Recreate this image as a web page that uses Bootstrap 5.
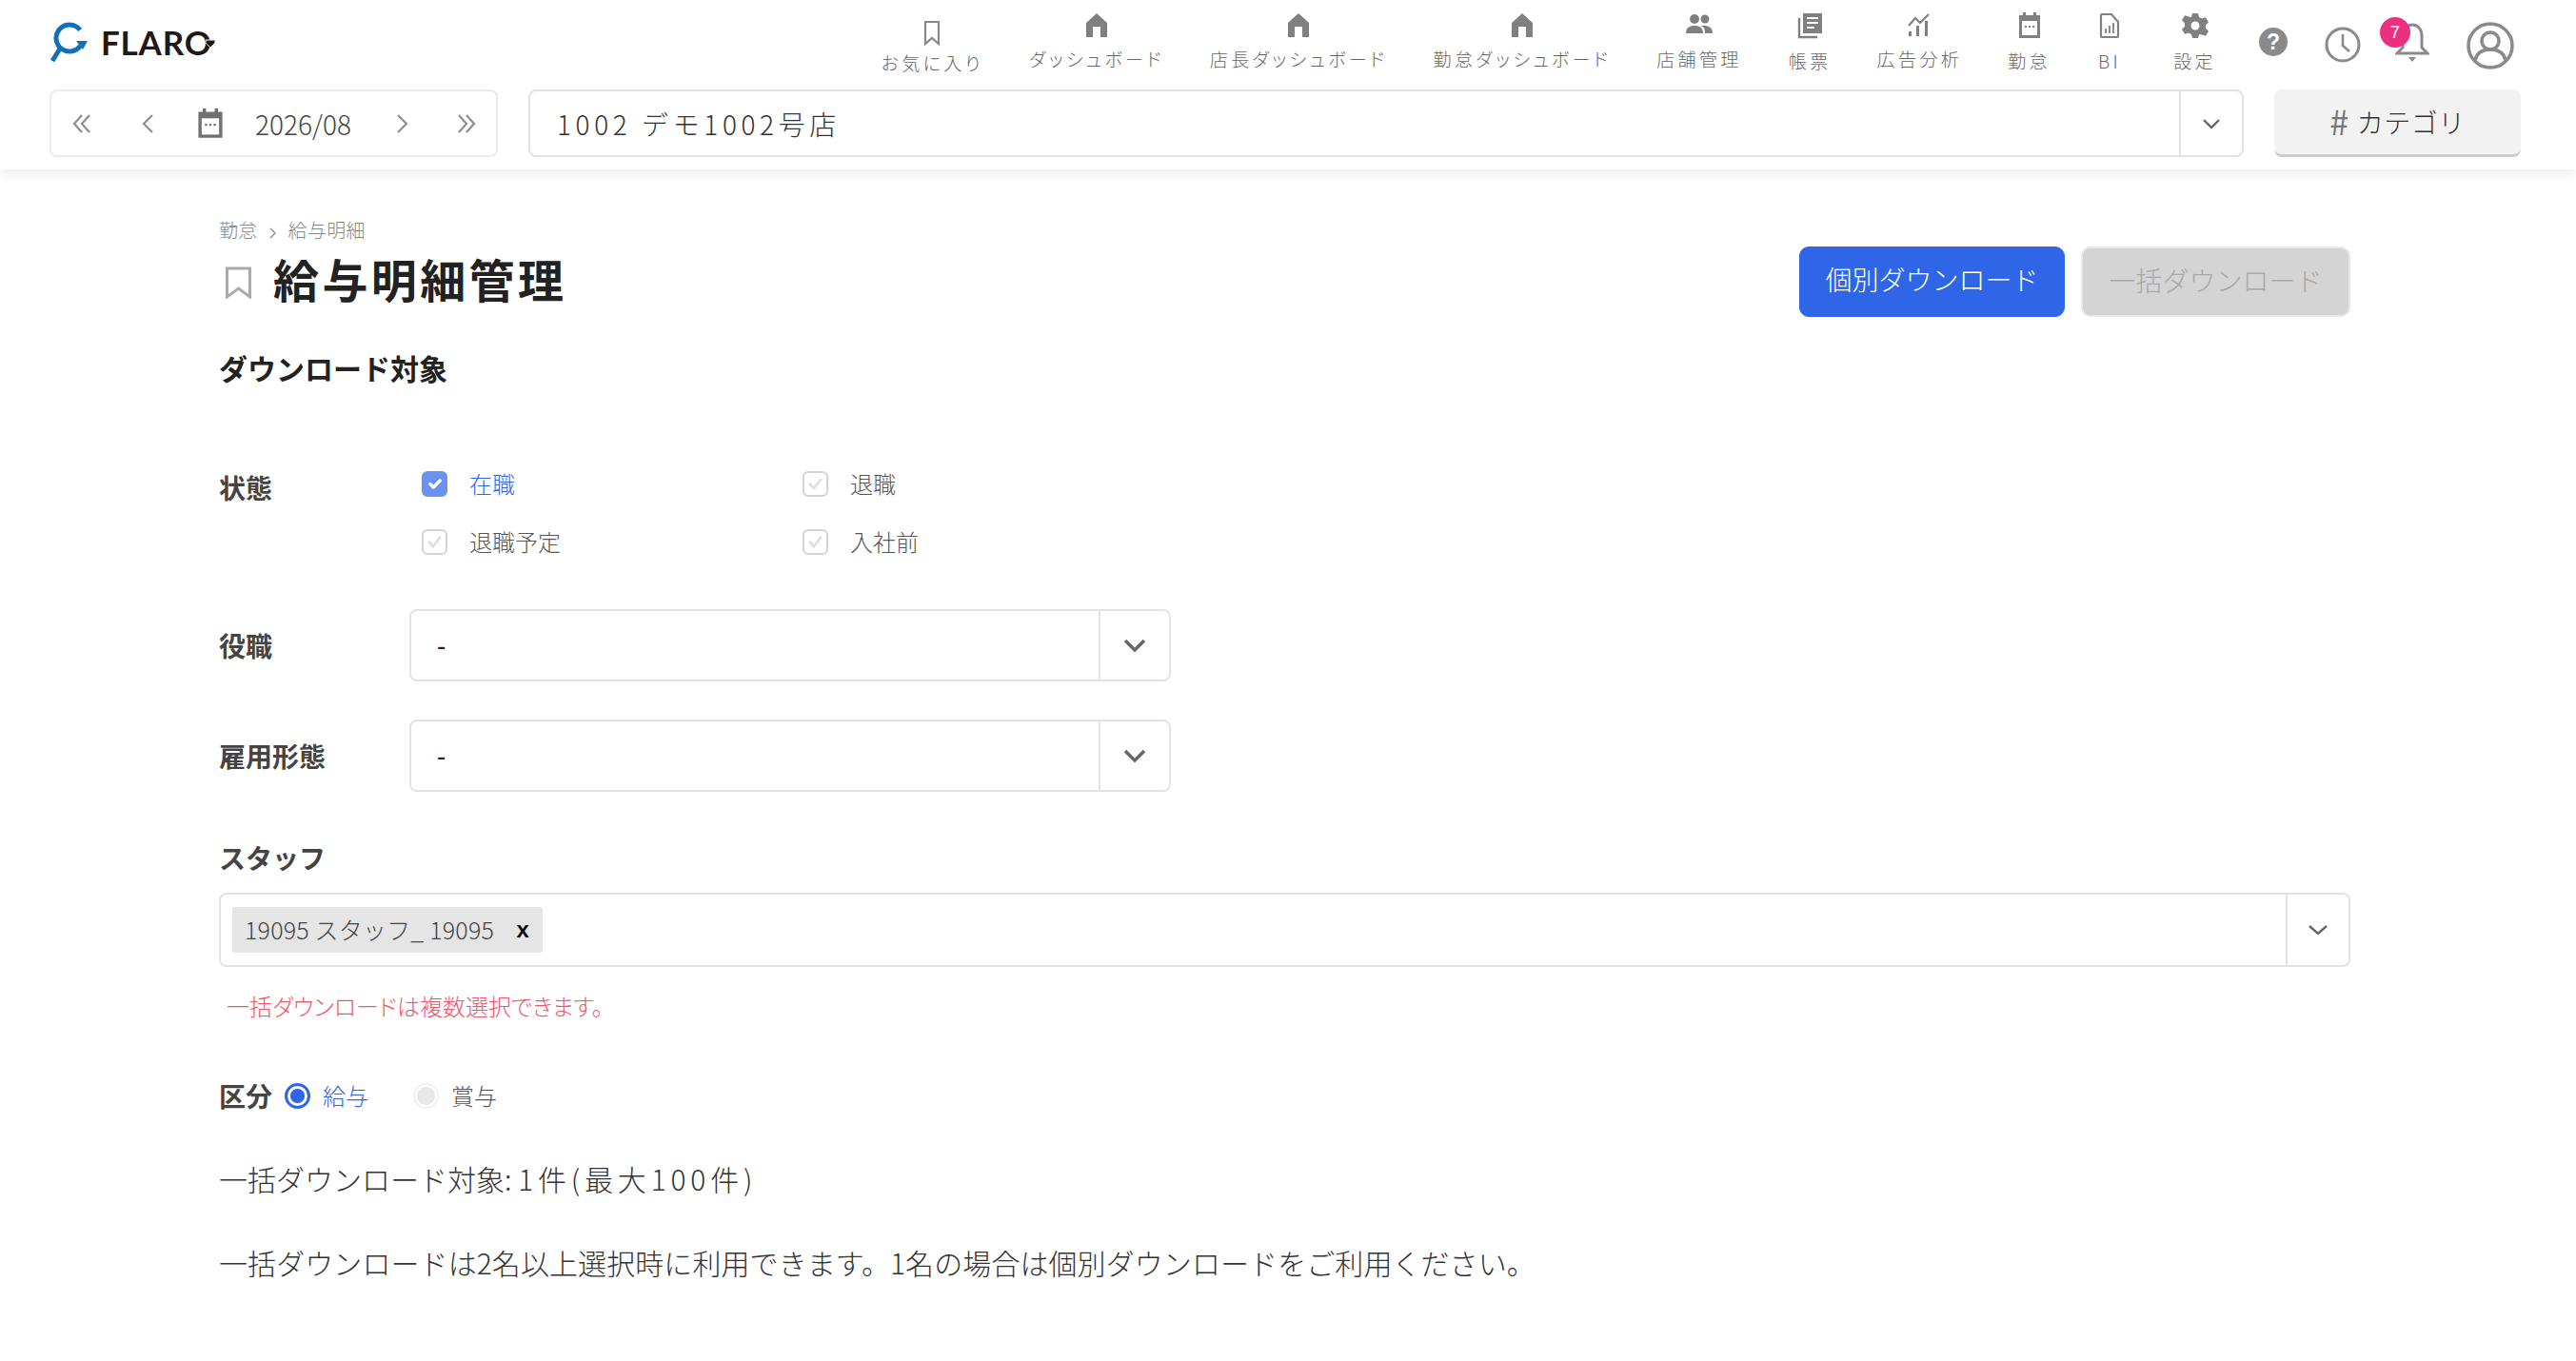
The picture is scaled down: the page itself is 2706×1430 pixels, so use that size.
<!DOCTYPE html>
<html lang="ja">
<head>
<meta charset="UTF-8">
<title>給与明細管理</title>
<link href="https://cdn.jsdelivr.net/npm/bootstrap@5.3.0/dist/css/bootstrap.min.css" rel="stylesheet">
<style>
body { font-family: "Noto Sans CJK JP", "Liberation Sans", sans-serif; color: #333; background: #fff; font-weight: 300; }
.top-head { height: 178px; box-shadow: 0 5px 12px rgba(0,0,0,.07); padding: 0 58px 0 52px; }
.head-row1 { height: 94px; }
.logo-text { font-family: Lato, sans-serif; font-weight: 700; font-size: 35px; color: #231815; line-height: 1; margin-left: 8px; letter-spacing: .8px; }
.logo-arrow { position: absolute; right: -3px; top: 13px; }
.nav-cell { color: #666; font-size: 19px; letter-spacing: 3.4px; line-height: 26px; font-feature-settings: "palt"; text-align: center; white-space: nowrap; margin-left: 48px; padding-top: 13px; }
.nav-cell svg { display: block; margin: 0 auto 10px; }
.nav-fav { padding-top: 21px; }
.nav-fav svg { margin-bottom: 4px; }
.nav-report { margin-left: 49px; }
.nav-bi { margin-left: 50px; }
.nav-set { margin-left: 55px; }
.tool-icons { margin-left: 44px; gap: 36px; padding-top: 20px; margin-right: 7px; }
.help-icon { margin-right: 2px; }
.bell-wrap { width: 36px; height: 50px; margin-right: 3px; }
.bell-badge { position: absolute; left: -16px; top: -2px; width: 32px; height: 32px; border-radius: 50%; background: #ec2f7f; color: #fff; font-size: 18px; line-height: 32px; text-align: center; font-family: "Liberation Sans", sans-serif; }
.head-row2 { gap: 32px; }
.date-box { width: 471px; height: 71px; border: 2px solid #ebebeb; border-radius: 8px; padding-left: 21px; font-size: 28px; color: #444; }
.date-prev { margin-left: 51px; }
.date-cal { margin-left: 45px; }
.date-txt { margin-left: 33px; width: 100px; white-space: nowrap; }
.date-next { margin-left: 48px; }
.date-last { margin-left: 49px; }
.shop-box { width: 1802px; height: 71px; border: 2px solid #e2e2e2; border-radius: 8px; }
.shop-name { font-size: 28px; letter-spacing: 4.6px; padding-left: 28px; color: #333; }
.arrow-cell { width: 66px; border-left: 2px solid #e2e2e2; }
.cat-btn { width: 259px; height: 71px; background: #f2f2f2; border: 0; border-bottom: 3px solid #ccc; border-radius: 8px; font-size: 28px; letter-spacing: .5px; color: #333; font-weight: 300; padding: 0 0 1px; }
.cat-hash { color: #777; font-size: 36px; line-height: 1; font-weight: 400; margin-right: 8px; vertical-align: -2px; }
.page-body { padding: 52px 237px 0 230px; }
.crumb-line { font-size: 20px; color: #888; line-height: 24px; letter-spacing: .3px; }
.crumb-line svg { margin: 0 12px; }
.title-row { height: 74px; margin-top: 5px; }
.title-mark { margin-left: 6px; margin-top: 2px; }
.page-title { font-size: 48px; font-weight: 700; letter-spacing: 3.4px; color: #222; margin: 0 0 0 22px; line-height: 1; padding-bottom: 8px; }
.btn-one { width: 279px; height: 74px; background: #2f66e8; border-color: #2f66e8; color: #fff; font-size: 28px; border-radius: 10px; font-weight: 300; padding: 0 0 6px; }
.btn-all, .btn-all:disabled { width: 283px; height: 74px; background: #d4d4d4; border: 2px solid #e8e8e8; color: #a8a8a8; font-size: 28px; border-radius: 10px; font-weight: 300; padding: 0 0 4px; opacity: 1; margin-left: 17px; }
.sect-title { font-size: 30px; font-weight: 700; color: #222; line-height: 40px; margin: 33px 0 0; }
.lbl-strong { font-size: 28px; font-weight: 700; color: #444; line-height: 36px; }
.state-row { margin-top: 88px; }
.state-lbl { width: 213px; }
.state-grid { display: grid; grid-template-columns: 400px 300px; row-gap: 33px; }
.chk-item { margin: 0; padding: 0; min-height: 26px; display: flex; align-items: center; gap: 23px; font-size: 24px; line-height: 26px; color: #555; }
.chk-item .form-check-input { float: none; margin: 1px 0 0; width: 27px; height: 27px; border-radius: 6px; border: 2px solid #d4d4d4; opacity: 1; }
.chk-item .chk-on:checked { background-color: #6a92f5; border-color: #6a92f5; }
.chk-item .chk-off:checked { background-color: #fff; background-image: url("data:image/svg+xml,%3csvg xmlns='http://www.w3.org/2000/svg' viewBox='0 0 20 20'%3e%3cpath fill='none' stroke='%23e0e0e0' stroke-linecap='round' stroke-linejoin='round' stroke-width='2.4' d='m5 10 3.5 4L15 6'/%3e%3c/svg%3e"); }
.txt-blue { color: #2f66e8; }
.sel-row { margin-top: 40px; }
.sel-row-first { margin-top: 57px; }
.sel-lbl { width: 200px; }
.sel-box { width: 800px; height: 76px; border: 2px solid #e2e2e2; border-radius: 8px; font-size: 26px; color: #222; }
.sel-val { padding-left: 27px; font-weight: 500; padding-bottom: 3px; }
.arrow-wide { width: 74px; border-left: 2px solid #e2e2e2; }
.arrow-staff { width: 66px; border-left: 2px solid #e2e2e2; }
.staff-lbl { margin-top: 51px; }
.staff-box { height: 78px; border: 2px solid #e2e2e2; border-radius: 8px; margin-top: 19px; padding-left: 12px; }
.staff-chip { height: 48px; width: 326px; background: #e5e5e5; border-radius: 3px; padding: 0 14px 0 13px; font-size: 25px; letter-spacing: .2px; color: #444; white-space: nowrap; }
.chip-x { font-size: 24px; font-weight: 700; color: #111; font-family: "Liberation Sans", sans-serif; line-height: 1; }
.note-red { color: #ef5468; font-size: 24px; margin: 25px 0 0 8px; line-height: 32px; font-feature-settings: "palt"; letter-spacing: 0; }
.kubun-row { margin-top: 60px; height: 36px; }
.kubun-row .lbl-strong { margin-right: 13px; }
.rad-item { display: flex; align-items: center; gap: 13px; font-size: 24px; margin: 0; padding: 0; min-height: 0; color: #555; }
.rad-item .form-check-input { float: none; margin: 0; width: 27px; height: 27px; opacity: 1; }
.rad-item .rad-on:checked[type=radio] { background-color: #fff; border: 3px solid #2f66e8; background-image: radial-gradient(circle, #2f66e8 0 7px, #fff 8px); }
.rad-item .rad-off:checked[type=radio] { background-color: #fff; border: 2px solid #f0f0f0; background-image: radial-gradient(circle, #e8e8e8 0 9px, #fff 10px); }
.rad-second { margin-left: 47px; }
.info-line { font-size: 30px; line-height: 44px; color: #333; margin: 0; }
.info-first { margin-top: 47px; }
.info-second { margin-top: 44px; letter-spacing: .08px; }
.info-wide { letter-spacing: 4.8px; }
</style>
</head>
<body>
<header class="top-head">
  <div class="head-row1 d-flex justify-content-between">
    <div class="d-flex align-items-center" style="padding-bottom:6px">
      <svg width="46" height="42" viewBox="0 0 46 42"><circle cx="21" cy="17" r="14" fill="none" stroke="#1270b8" stroke-width="5" stroke-dasharray="70 18" transform="rotate(35 21 17)"/><path d="M28 20h12l-5 9z" fill="#1270b8"/><path d="M11 28 3 41" stroke="#1270b8" stroke-width="5" fill="none"/></svg>
      <span class="logo-text position-relative">FLARO<svg class="logo-arrow" width="10" height="10" viewBox="0 0 10 10"><path d="M0 2h10v3l-5 5-5-5z" fill="#231815" stroke="#fff"/></svg></span>
    </div>
    <nav class="d-flex">
      <div class="nav-cell nav-fav"><svg width="20" height="28" viewBox="0 0 20 28"><path d="M3 2h14v23l-7-6-7 6z" fill="none" stroke="#888" stroke-width="2.2"/></svg>お気に入り</div>
      <div class="nav-cell"><svg width="24" height="26" viewBox="0 0 24 26"><path d="M12 1 23 11v15h-7V15H8v11H1V11z" fill="#808080"/></svg>ダッシュボード</div>
      <div class="nav-cell"><svg width="24" height="26" viewBox="0 0 24 26"><path d="M12 1 23 11v15h-7V15H8v11H1V11z" fill="#808080"/></svg>店長ダッシュボード</div>
      <div class="nav-cell"><svg width="24" height="26" viewBox="0 0 24 26"><path d="M12 1 23 11v15h-7V15H8v11H1V11z" fill="#808080"/></svg>勤怠ダッシュボード</div>
      <div class="nav-cell"><svg width="30" height="26" viewBox="0 0 30 26"><circle cx="10" cy="7" r="5" fill="#808080"/><circle cx="21" cy="7" r="4.5" fill="#808080"/><path d="M1 22c0-6 4-8 9-8s9 2 9 8zM20 14c5 0 9 2 9 8h-8c0-3-0-6-4-8z" fill="#808080"/></svg>店舗管理</div>
      <div class="nav-cell nav-report"><svg width="28" height="28" viewBox="0 0 28 28"><path d="M3 6v20h19" fill="none" stroke="#808080" stroke-width="2.4"/><path d="M7 1h20v21H7z" fill="#808080"/><path d="M11 6h12M11 11h12M11 16h8" stroke="#fff" stroke-width="2.2"/></svg>帳票</div>
      <div class="nav-cell"><svg width="26" height="26" viewBox="0 0 26 26"><path d="M2 14 9 6l5 5 9-9" fill="none" stroke="#808080" stroke-width="2.2"/><path d="M2 20h3v5H2zM10 14h3v11h-3zM19 9h3v16h-3z" fill="#808080"/></svg>広告分析</div>
      <div class="nav-cell"><svg width="24" height="28" viewBox="0 0 24 28"><path d="M5 0h3v3h8V0h3v3h4v24H1V3h4z" fill="#808080"/><path d="M4 9h16v15H4z" fill="#fff"/><path d="M7 14h2v2H7zM11 14h2v2h-2zM15 14h2v2h-2z" fill="#808080"/></svg>勤怠</div>
      <div class="nav-cell nav-bi"><svg width="22" height="28" viewBox="0 0 22 28"><path d="M3 2h10l7 8v15a1 1 0 0 1-1 1H3a1 1 0 0 1-1-1V3a1 1 0 0 1 1-1z" fill="none" stroke="#808080" stroke-width="2.2"/><path d="M7 17v5M11 14v8M15 11v11" stroke="#808080" stroke-width="1.8"/></svg>BI</div>
      <div class="nav-cell nav-set"><svg width="28" height="28" viewBox="0 0 28 28"><path d="M11 1h6l1 4 3 1.6 4-1.4 3 5-3 3v3.600l3 3-3 5-4-1.400L18 23l-1 4h-6l-1-4-3-1.600-4 1.400-3-5 3-3v-3.600l-3-3 3-5 4 1.400L10 5z" fill="#808080"/><circle cx="14" cy="14" r="4.500" fill="#fff"/></svg>設定</div>
      <div class="d-flex tool-icons align-items-start">
        <svg class="mt-2 help-icon" width="32" height="32" viewBox="0 0 32 32"><circle cx="16" cy="16" r="15" fill="#8a8a8a"/><text x="16" y="24" font-size="23" font-weight="700" fill="#fff" text-anchor="middle" font-family="Liberation Sans">?</text></svg>
        <svg class="mt-2" width="38" height="38" viewBox="0 0 38 38"><circle cx="19" cy="19" r="17" fill="none" stroke="#8a8a8a" stroke-width="3"/><path d="M19 8v12l7 6" fill="none" stroke="#8a8a8a" stroke-width="2.600"/></svg>
        <div class="bell-wrap position-relative">
          <svg width="36" height="48" viewBox="0 0 36 48"><path d="M18 6c-6 0-10 5-10 12v12l-6 6h32l-6-6V18c0-7-4-12-10-12z" fill="none" stroke="#8a8a8a" stroke-width="3"/><path d="M14 40h8l-4 5z" fill="#8a8a8a"/></svg>
          <span class="bell-badge">7</span>
        </div>
        <svg style="margin-top:3px" width="50" height="50" viewBox="0 0 50 50"><circle cx="25" cy="25" r="23" fill="none" stroke="#8a8a8a" stroke-width="3.500"/><circle cx="25" cy="20" r="9" fill="none" stroke="#8a8a8a" stroke-width="3.500"/><path d="M9 40c2-8 8-11 16-11s14 3 16 11" fill="none" stroke="#8a8a8a" stroke-width="3.500"/></svg>
      </div>
    </nav>
  </div>
  <div class="head-row2 d-flex">
    <div class="date-box d-flex align-items-center">
      <svg width="22" height="24" viewBox="0 0 22 24"><path d="M11 3 3 12l8 9M19 3l-8 9 8 9" fill="none" stroke="#8f8f8f" stroke-width="2.200"/></svg>
      <svg class="date-prev" width="14" height="24" viewBox="0 0 14 24"><path d="M12 3 3 12l9 9" fill="none" stroke="#8f8f8f" stroke-width="2.200"/></svg>
      <svg class="date-cal" width="28" height="32" viewBox="0 0 24 28"><path d="M5 0h3v3h8V0h3v3h4v24H1V3h4z" fill="#707070"/><path d="M4 9h16v15H4z" fill="#fff"/><path d="M7 14h2v2H7zM11 14h2v2h-2zM15 14h2v2h-2z" fill="#707070"/></svg>
      <span class="date-txt">2026/08</span>
      <svg class="date-next" width="14" height="24" viewBox="0 0 14 24"><path d="m2 3 9 9-9 9" fill="none" stroke="#8f8f8f" stroke-width="2.200"/></svg>
      <svg class="date-last" width="22" height="24" viewBox="0 0 22 24"><path d="m3 3 8 9-8 9M11 3l8 9-8 9" fill="none" stroke="#8f8f8f" stroke-width="2.200"/></svg>
    </div>
    <div class="shop-box d-flex">
      <div class="shop-name flex-grow-1 d-flex align-items-center">1002 デモ1002号店</div>
      <div class="arrow-cell d-flex align-items-center justify-content-center"><svg width="20" height="12" viewBox="0 0 20 12"><path d="m2 2 8 8 8-8" fill="none" stroke="#666" stroke-width="2.400"/></svg></div>
    </div>
    <button class="cat-btn btn"><span class="cat-hash">#</span>カテゴリ</button>
  </div>
</header>

<main class="page-body">
  <div class="crumb-line">勤怠<svg width="8" height="12" viewBox="0 0 8 12"><path d="m1 1 5 5-5 5" fill="none" stroke="#888" stroke-width="1.300"/></svg>給与明細</div>
  <div class="title-row d-flex align-items-center">
    <svg class="title-mark" width="29" height="34" viewBox="0 0 28 34"><path d="M2 2h24v30l-12-9-12 9z" fill="none" stroke="#aaa" stroke-width="3"/></svg>
    <h1 class="page-title">給与明細管理</h1>
    <div class="ms-auto d-flex">
      <button class="btn btn-one">個別ダウンロード</button>
      <button class="btn btn-all" disabled>一括ダウンロード</button>
    </div>
  </div>
  <h2 class="sect-title">ダウンロード対象</h2>

  <div class="state-row d-flex">
    <div class="lbl-strong state-lbl">状態</div>
    <div class="state-grid">
      <label class="chk-item form-check"><input class="form-check-input chk-on" type="checkbox" checked><span class="txt-blue">在職</span></label>
      <label class="chk-item form-check"><input class="form-check-input chk-off" type="checkbox" checked disabled>退職</label>
      <label class="chk-item form-check"><input class="form-check-input chk-off" type="checkbox" checked disabled>退職予定</label>
      <label class="chk-item form-check"><input class="form-check-input chk-off" type="checkbox" checked disabled>入社前</label>
    </div>
  </div>

  <div class="sel-row sel-row-first d-flex align-items-center">
    <div class="lbl-strong sel-lbl">役職</div>
    <div class="sel-box d-flex">
      <div class="sel-val flex-grow-1 d-flex align-items-center">-</div>
      <div class="arrow-wide d-flex align-items-center justify-content-center"><svg width="24" height="14" viewBox="0 0 24 14"><path d="m2 2 10 10L22 2" fill="none" stroke="#666" stroke-width="3.400"/></svg></div>
    </div>
  </div>
  <div class="sel-row d-flex align-items-center">
    <div class="lbl-strong sel-lbl">雇用形態</div>
    <div class="sel-box d-flex">
      <div class="sel-val flex-grow-1 d-flex align-items-center">-</div>
      <div class="arrow-wide d-flex align-items-center justify-content-center"><svg width="24" height="14" viewBox="0 0 24 14"><path d="m2 2 10 10L22 2" fill="none" stroke="#666" stroke-width="3.400"/></svg></div>
    </div>
  </div>

  <div class="lbl-strong staff-lbl">スタッフ</div>
  <div class="staff-box d-flex align-items-center">
    <div class="staff-chip d-flex align-items-center justify-content-between"><span>19095 スタッフ_ 19095</span><span class="chip-x">x</span></div>
    <div class="ms-auto align-self-stretch arrow-staff d-flex align-items-center justify-content-center"><svg width="22" height="12" viewBox="0 0 22 12"><path d="m2 2 9 8 9-8" fill="none" stroke="#666" stroke-width="2.400"/></svg></div>
  </div>
  <p class="note-red">一括ダウンロードは複数選択できます。</p>

  <div class="kubun-row d-flex align-items-center">
    <div class="lbl-strong">区分</div>
    <label class="rad-item form-check"><input class="form-check-input rad-on" type="radio" name="kubun" checked><span class="txt-blue">給与</span></label>
    <label class="rad-item form-check rad-second"><input class="form-check-input rad-off" type="radio" name="kubun2" checked disabled>賞与</label>
  </div>
  <p class="info-line info-first">一括ダウンロード対象: <span class="info-wide">1件(最大100件)</span></p>
  <p class="info-line info-second">一括ダウンロードは2名以上選択時に利用できます。1名の場合は個別ダウンロードをご利用ください。</p>
</main>
<script src="https://cdn.jsdelivr.net/npm/bootstrap@5.3.0/dist/js/bootstrap.bundle.min.js"></script>
</body>
</html>
